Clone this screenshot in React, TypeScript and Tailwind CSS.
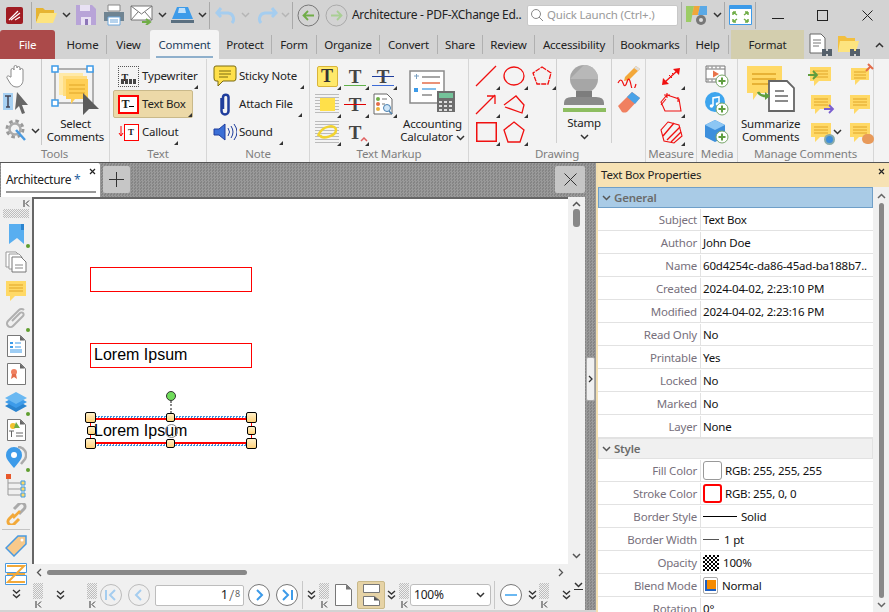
import type { ReactNode } from "react";

const CHECKER = "bg-[repeating-conic-gradient(#9a9a9a_0_25%,#858585_0_50%)] bg-[length:3px_3px]";
const DOTS = "bg-[repeating-conic-gradient(#bdbdbd_0_25%,transparent_0_50%)] bg-[length:2px_2px]";

function Ico({ w, h, children, className }: { w: number; h: number; children: ReactNode; className?: string }) {
  return (
    <svg width={w} height={h} viewBox={`0 0 ${w} ${h}`} fill="none" className={`block shrink-0 ${className ?? ""}`}>
      {children}
    </svg>
  );
}

function Chev({ color = "#333", up }: { color?: string; up?: boolean }) {
  return (
    <Ico w={9} h={6}>
      <path d={up ? "M1 5l3.5-3.5L8 5" : "M1 1l3.5 3.5L8 1"} stroke={color} strokeWidth="1.5" />
    </Ico>
  );
}

function DChev() {
  return (
    <Ico w={9} h={10}>
      <path d="M1 1l3.5 3L8 1M1 5.5l3.5 3 3.5-3" stroke="#333" strokeWidth="1.4" />
    </Ico>
  );
}

function Grip({ h = 16 }: { h?: number }) {
  return (
    <div className="flex flex-col items-center gap-[2px]">
      <div style={{ height: h }} className={`w-[10px] ${DOTS}`} />
      <Ico w={7} h={7}>
        <path d="M1 0v7M6 0.5L3 3.5l3 3" stroke="#333" strokeWidth="1" />
      </Ico>
    </div>
  );
}

/* small black drop-down marker in the corner of ribbon buttons */
function Corner() {
  return (
    <Ico w={4} h={4} className="absolute right-0 bottom-0">
      <path d="M4 0v4H0z" fill="#333" />
    </Ico>
  );
}

function Bubble({ w = 22, h = 20, line = "#e0a526", fill = "#ffd966" }: { w?: number; h?: number; line?: string; fill?: string }) {
  const b = h - 6;
  return (
    <Ico w={w} h={h}>
      <path d={`M1 1h${w - 2}v${b}H10l-5 5v-5H1z`} fill={fill} />
      <path d={`M4 5h${w - 8}M4 8h${w - 8}M4 11h${w - 8}`} stroke={line} strokeWidth="1" />
    </Ico>
  );
}

function TitleLetter({ size = 14 }: { size?: number }) {
  return <span className="font-['Liberation_Serif',serif] font-bold leading-none" style={{ fontSize: size }}>T</span>;
}

function Sep() {
  return <div className="h-[27px] w-px shrink-0 bg-[#a9a9a9]" />;
}

function TitleBar() {
  return (
    <div className="flex h-[30px] shrink-0 items-center bg-[#d3d3d3]">
      <div className="ml-[6px] mr-[8px] flex h-[17px] w-[17px] items-center justify-center rounded-[2px] bg-[#a01c22]">
        <Ico w={13} h={11}>
          <path d="M1 10L10 1M3 10l9-7M7 10l5-3" stroke="#fff" strokeWidth="1.2" />
        </Ico>
      </div>
      <Sep />
      <div className="ml-[3px]">
        <Ico w={23} h={20}>
          <path d="M1 3h7l2 2h9v3H5L1 18z" fill="#e6b432" />
          <path d="M5 8h17l-4 10H1z" fill="#fde47f" />
        </Ico>
      </div>
      <div className="ml-[4px]"><Chev /></div>
      <div className="ml-[4px]">
        <Ico w={22} h={22}>
          <path d="M1 1h16l4 4v16H1z" fill="#b8a4d8" />
          <path d="M5 1h10v6H5zM6 13h10v8H6z" fill="#e8e1f3" />
          <path d="M10 15h3v6h-3z" fill="#8d76b8" />
        </Ico>
      </div>
      <div className="ml-[6px]">
        <Ico w={22} h={22}>
          <path d="M5 1h12v6H5z" fill="#fff" stroke="#888" />
          <path d="M1 8h20v9H1z" fill="#6f8492" />
          <path d="M5 13h12v8H5z" fill="#fff" stroke="#6fa8dc" />
          <path d="M7 16h8M7 18h8" stroke="#6fa8dc" />
        </Ico>
      </div>
      <div className="ml-[5px]">
        <Ico w={24} h={20}>
          <path d="M1 1h21v14H1z" fill="#fff" stroke="#777" />
          <path d="M1 1l10.500 8L22 1M1 15l7-8M22 15l-7-8" stroke="#777" />
          <path d="M12 17h7M16 14l4 3-4 3" stroke="#70ad47" strokeWidth="2" />
        </Ico>
      </div>
      <div className="ml-[4px]"><Chev /></div>
      <div className="ml-[3px]">
        <Ico w={25} h={18}>
          <path d="M7 1h11l5 12H2z" fill="#3d9be9" />
          <path d="M9 2h6l1 5H8z" fill="#bfe0fb" />
          <path d="M1 14h23v3H1z" fill="#5a6f80" />
        </Ico>
      </div>
      <div className="ml-[3px]"><Chev /></div>
      <div className="ml-[2px]"><Sep /></div>
      <div className="ml-[5px]">
        <Ico w={23} h={18}>
          <path d="M6 2L2 7l4 4M3 7h10a6 6 0 0 1 4 10" stroke="#a5cdef" strokeWidth="3" />
        </Ico>
      </div>
      <div className="ml-[3px]"><Chev color="#b5b5b5" /></div>
      <div className="ml-[5px]">
        <Ico w={23} h={18}>
          <path d="M17 2l4 5-4 4M20 7H10a6 6 0 0 0-4 10" stroke="#a5cdef" strokeWidth="3" />
        </Ico>
      </div>
      <div className="ml-[3px]"><Chev color="#b5b5b5" /></div>
      <div className="ml-[2px]"><Sep /></div>
      <div className="ml-[4px]">
        <Ico w={23} h={23}>
          <circle cx="11.500" cy="11.500" r="10.500" stroke="#777" />
          <path d="M17 11.500H7M11 7l-4.500 4.500L11 16" stroke="#70ad47" strokeWidth="1.800" />
        </Ico>
      </div>
      <div className="ml-[5px]">
        <Ico w={23} h={23}>
          <circle cx="11.500" cy="11.500" r="10.500" stroke="#aaa" />
          <path d="M6 11.500h10M12 7l4.500 4.500L12 16" stroke="#a9cf94" strokeWidth="1.800" />
        </Ico>
      </div>
      <span className="ml-[4px] w-[175px] shrink-0 whitespace-nowrap text-[12px] tracking-[-0.3px] text-[#222]">Architecture - PDF-XChange Ed..</span>
      <div className="flex h-[21px] w-[151px] shrink-0 items-center rounded-[2px] border border-[#c8c8c8] bg-white pl-[2px]">
        <Ico w={14} h={14}>
          <circle cx="6" cy="6" r="4.500" stroke="#888" />
          <path d="M9 9l4 4" stroke="#888" />
        </Ico>
        <span className="ml-[3px] whitespace-nowrap text-[#9a9a9a]">Quick Launch (Ctrl+.)</span>
      </div>
      <div className="ml-[3px]"><Sep /></div>
      <div className="ml-[3px]">
        <Ico w={24} h={24}>
          <path d="M1 3h8l-3 16H1z" fill="#9ccc65" />
          <path d="M9 3h6l-2 9H7z" fill="#f0a73a" />
          <path d="M15 3h7v9h-9z" fill="#5aa9e6" />
          <circle cx="16" cy="17" r="5" fill="#777" />
          <circle cx="16" cy="17" r="2" fill="#ddd" />
        </Ico>
      </div>
      <div className="ml-[4px]"><Chev /></div>
      <div className="ml-[2px]"><Sep /></div>
      <div className="ml-[4px]">
        <Ico w={23} h={20}>
          <path d="M.5.5h22v19H.5z" fill="#fff" stroke="#3d9be9" />
          <path d="M1 1h21v3H1z" fill="#3d9be9" />
          <path d="M4 7l4 3M4 7v3M4 7h3M19 7l-4 3M19 7v3M19 7h-3M4 17l4-3M4 17v-3M4 17h3M19 17l-4-3M19 17v-3M19 17h-3" stroke="#70ad47" strokeWidth="1.500" />
        </Ico>
      </div>
      <div className="ml-[3px]"><Sep /></div>
      <div className="ml-[16px]">
        <Ico w={12} h={12}><path d="M0 9.500h12" stroke="#222" /></Ico>
      </div>
      <div className="ml-[33px] h-[11px] w-[11px] border border-[#222]" />
      <div className="ml-[34px]">
        <Ico w={11} h={11}><path d="M.5.5l10 10M10.500.5l-10 10" stroke="#222" /></Ico>
      </div>
    </div>
  );
}

const TABS = [
  { label: "Home", w: 52 },
  { label: "View", w: 43 },
  { label: "Comment", w: 69, active: true },
  { label: "Protect", w: 53 },
  { label: "Form", w: 45 },
  { label: "Organize", w: 63 },
  { label: "Convert", w: 58 },
  { label: "Share", w: 45 },
  { label: "Review", w: 52 },
  { label: "Accessibility", w: 79 },
  { label: "Bookmarks", w: 73 },
  { label: "Help", w: 42 },
];

function TabBar() {
  return (
    <div className="flex h-[29px] shrink-0 items-stretch bg-[#d3d3d3] text-[#222]">
      <div className="flex w-[55px] items-center justify-center rounded-t-[3px] bg-[#ab4a4a] text-white">File</div>
      {TABS.map((t) =>
        t.active ? (
          <div key={t.label} style={{ width: t.w }} className="relative flex items-center justify-center rounded-t-[3px] bg-[#f4f4f4] text-[#1f3d5c]">
            {t.label}
            <div className="absolute bottom-[1px] left-[6px] right-[6px] h-[2px] bg-[#8fb0cc]" />
          </div>
        ) : (
          <div key={t.label} style={{ width: t.w }} className="flex items-center justify-center">
            <span className={`flex-1 text-center ${t.label === "Home" ? "pl-[4px]" : ""}`}>{t.label}</span>
            {t.label !== "View" && <div className="h-[19px] w-px bg-[#b0b0b0]" />}
          </div>
        )
      )}
      <div className="ml-[2px] flex w-[73px] items-center justify-center bg-[#d3ceae]">Format</div>
      <div className="ml-[4px] flex items-center">
        <Ico w={26} h={24}>
          <path d="M2 1h11l4 4v15H2z" fill="#fff" stroke="#666" />
          <path d="M5 7h8M5 10h8M5 13h6" stroke="#777" />
          <path d="M14 16h4v7h-4zM20 16h4v7h-4zM17 18h4v3h-4z" fill="#55606b" />
        </Ico>
      </div>
      <div className="ml-[3px] flex items-center">
        <Ico w={26} h={24}>
          <path d="M1 3h7l2 2h8v14H1z" fill="#f2bf3f" />
          <path d="M3 8h19l-3 11H1z" fill="#fde47f" />
          <path d="M13 16h4v7h-4zM19 16h4v7h-4zM16 18h4v3h-4z" fill="#55606b" />
        </Ico>
      </div>
      <div className="ml-[12px] flex items-center"><Chev up /></div>
    </div>
  );
}

function Group({ label, width, children }: { label: string; width: number; children: ReactNode }) {
  return (
    <div style={{ width }} className="flex shrink-0 flex-col border-r border-[#d6d6d6]">
      <div className="h-[86px] shrink-0">{children}</div>
      <div className="flex flex-1 items-center justify-center whitespace-nowrap text-[#7f7f7f]">{label}</div>
    </div>
  );
}

function ListBtn({ icon, label, active, w }: { icon: ReactNode; label: string; active?: boolean; w: number }) {
  return (
    <div style={{ width: w }} className={`relative flex h-[28px] items-center rounded-[2px] border ${active ? "border-[#c9b98a] bg-[#ecd9a8]" : "border-transparent"}`}>
      <div className="flex w-[28px] shrink-0 justify-center">{icon}</div>
      <span className="whitespace-nowrap">{label}</span>
      <Corner />
    </div>
  );
}

function Cell({ children, corner = true }: { children: ReactNode; corner?: boolean }) {
  return (
    <div className="relative flex h-[28px] w-[28px] items-center justify-center">
      {children}
      {corner && <Corner />}
    </div>
  );
}

function Tools() {
  return (
    <div className="flex h-full">
      <div className="flex w-[42px] flex-col border-r border-[#c9c9c9] pl-[5px] pt-[5px]">
        <Ico w={22} h={24}>
          <path d="M6 13V6a1.500 1.500 0 0 1 3 0V3a1.500 1.500 0 0 1 3 0v1a1.500 1.500 0 0 1 3 0v2a1.500 1.500 0 0 1 3 0v10c0 4-3 7-6 7s-5-1-7-4l-3-5c-1-2 2-3 3-1z" fill="#fff" stroke="#8a8a8a" />
        </Ico>
        <div className="-ml-[2px] mt-[3px]">
          <Ico w={26} h={25}>
            <path d="M0 2h10v17H0z" fill="#a7d0f2" />
            <path d="M2 5h6M5 5v11M3 16h4" stroke="#445" strokeWidth="1.500" />
            <path d="M14 1l11 13h-6l3 8-3 1-3-8-4 4z" fill="#666" />
          </Ico>
        </div>
        <div className="mt-[3px] flex items-center gap-[4px]">
          <Ico w={22} h={24}>
            <circle cx="10" cy="10" r="8" stroke="#999" strokeWidth="3" strokeDasharray="3.500 2.800" />
            <circle cx="10" cy="10" r="5.500" stroke="#aaa" strokeWidth="2.500" />
            <path d="M11 11l9 10" stroke="#4a9ae0" strokeWidth="2.500" />
          </Ico>
          <Chev />
        </div>
      </div>
      <div className="flex flex-1 flex-col items-center pt-[6px]">
        <Ico w={50} h={50}>
          <path d="M4 4h38v34H4z" stroke="#9a9a9a" strokeWidth="1.500" />
          <rect x="1" y="1" width="6" height="6" fill="#fff" stroke="#3d9be9" strokeWidth="1.500" />
          <rect x="36" y="1" width="6" height="6" fill="#fff" stroke="#3d9be9" strokeWidth="1.500" />
          <rect x="1" y="35" width="6" height="6" fill="#fff" stroke="#3d9be9" strokeWidth="1.500" />
          <path d="M8 8h24v22H8z" fill="#ffe9a8" />
          <path d="M12 11h24v20H12z" fill="#ffdd80" />
          <path d="M15 14h22v20H24l-4 5v-5h-5z" fill="#ffcf55" />
          <path d="M18 20h16M18 24h16M18 28h16" stroke="#e0a526" />
          <path d="M32 28l16 16H38l-6 6z" fill="#5c5c5c" />
        </Ico>
        <div className="mt-[2px] text-center leading-[13px]">Select<br />Comments</div>
      </div>
    </div>
  );
}

function TextGroup() {
  return (
    <div className="flex flex-col gap-0 pl-[3px] pt-[3px]">
      <ListBtn w={86} label="Typewriter" icon={
        <div className="relative h-[21px] w-[21px] border border-dotted border-[#555]">
          <div className="pl-[3px] pt-[1px]"><TitleLetter size={10} /></div>
          <div className="absolute bottom-[2px] left-[2px] right-[2px] h-[5px] bg-[repeating-linear-gradient(90deg,#444_0_3px,transparent_3px_4px)]" />
        </div>
      } />
      <ListBtn w={80} active label="Text Box" icon={
        <div className="flex h-[19px] w-[21px] items-center justify-center border-2 border-[#ff0000] bg-white">
          <TitleLetter size={12} /><span className="mt-[5px] h-px w-[5px] bg-black" />
        </div>
      } />
      <ListBtn w={66} label="Callout" icon={
        <div className="flex items-center">
          <Ico w={6} h={12}><path d="M3 0v10M1 7l2 3 2-3" stroke="#ff0000" strokeWidth="1" /></Ico>
          <div className="flex h-[17px] w-[15px] items-center justify-center border border-[#ff0000] bg-white"><TitleLetter size={9} /></div>
        </div>
      } />
    </div>
  );
}

function NoteGroup() {
  return (
    <div className="flex flex-col pl-[3px] pt-[3px]">
      <ListBtn w={95} label="Sticky Note" icon={
        <Ico w={24} h={22}>
          <path d="M3 1h18q2 0 2 2v10q0 3-2 3H10l-5 5v-5H3q-2 0-2-3V3q0-2 2-2z" fill="#ffe04a" stroke="#7a6a10" />
          <path d="M6 6h12M6 9h12M6 12h9" stroke="#7a6a10" />
        </Ico>
      } />
      <ListBtn w={93} label="Attach File" icon={
        <Ico w={12} h={24}>
          <path d="M2.500 6v13a3.500 3.500 0 0 0 7 0V5a2.800 2.800 0 0 0-5.500 0v12" stroke="#1f3d9c" strokeWidth="2.500" />
        </Ico>
      } />
      <ListBtn w={74} label="Sound" icon={
        <Ico w={24} h={18}>
          <path d="M1 6h5l6-5v16l-6-5H1z" fill="#3b6fd6" stroke="#1f3d9c" />
          <path d="M15 5q3 4 0 8M18 3q4 6 0 12M21 1q6 8 0 16" stroke="#1f3d9c" />
        </Ico>
      } />
    </div>
  );
}

function UnderT({ under, strike, extra }: { under?: string; strike?: string; extra?: ReactNode }) {
  return (
    <div className="relative flex h-[22px] w-[22px] flex-col items-center justify-center text-[#444]">
      <TitleLetter size={19} />
      {under && <div style={{ background: under }} className="absolute bottom-[1px] left-0 right-0 h-px" />}
      {strike && <div style={{ background: strike }} className="absolute left-0 right-0 top-[11px] h-px" />}
      {extra}
    </div>
  );
}

function TextMarkup() {
  return (
    <div className="flex">
      <div className="grid grid-cols-[28px_28px_28px] pl-[3px] pt-[3px]">
        <Cell>
          <div className="flex h-[21px] w-[21px] items-center justify-center rounded-[2px] border border-[#d9b43a] bg-[#ffe96a] text-[#333]"><TitleLetter size={18} /></div>
        </Cell>
        <Cell><UnderT under="#5fb04a" /></Cell>
        <Cell><UnderT under="#3d6bd6" strike="#1f3d9c" /></Cell>
        <Cell>
          <div className="flex h-[20px] w-[24px] items-center justify-center bg-[repeating-linear-gradient(#bbb_0_1px,transparent_1px_3px)]"><div className="h-[13px] w-[15px] bg-[#ffe04a]" /></div>
        </Cell>
        <Cell><UnderT strike="#e00000" /></Cell>
        <Cell>
          <Ico w={21} h={22}>
            <path d="M1 1h13l5 5v15H1z" fill="#fff" stroke="#666" />
            <circle cx="5" cy="6" r="2" fill="#70ad47" />
            <circle cx="5" cy="11" r="2" fill="#e36c4a" />
            <circle cx="5" cy="16" r="2" fill="#e8b13a" />
            <path d="M9 6h5M9 11h3" stroke="#777" />
            <circle cx="14" cy="15" r="3.500" fill="#cfe6f8" stroke="#4a80b0" />
            <path d="M16 18l3 3" stroke="#4a80b0" strokeWidth="1.500" />
          </Ico>
        </Cell>
        <Cell>
          <div className="flex h-[22px] w-[24px] items-center justify-center bg-[repeating-linear-gradient(#bbb_0_1px,transparent_1px_3px)]">
            <Ico w={22} h={18}><path d="M2 13c4-11 18-12 18-6s-14 10-16 5" stroke="#f2d430" strokeWidth="2.500" /></Ico>
          </div>
        </Cell>
        <Cell><UnderT extra={<Ico w={8} h={5} className="absolute bottom-[1px] right-[-2px]"><path d="M1 4l3-3 3 3" stroke="#e06060" strokeWidth="1.500" /></Ico>} /></Cell>
      </div>
      <div className="flex w-[75px] flex-col items-center pt-[11px]">
        <Ico w={47} h={43}>
          <path d="M1 1h34v32H1z" fill="#fff" stroke="#8a8a8a" strokeWidth="1.500" />
          <path d="M5 6h5M7.500 4v5" stroke="#7a9fc0" />
          <path d="M13 7h18" stroke="#888" strokeWidth="1.500" />
          <path d="M13 13h18" stroke="#e36c4a" strokeWidth="1.500" />
          <path d="M13 19h14" stroke="#5aa9e6" strokeWidth="1.500" />
          <path d="M13 25h10" stroke="#888" strokeWidth="1.500" />
          <path d="M5 18h4v4H5z" fill="#3d9be9" />
          <path d="M28 21h18v21H28z" fill="#6d6d6d" />
          <path d="M30 23h14v5H30z" fill="#74c39a" />
          <path d="M30 31h3v2h-3zM35 31h3v2h-3zM40 31h3v2h-3zM30 35h3v2h-3zM35 35h3v2h-3zM40 35h3v2h-3zM30 39h3v2h-3zM35 39h3v2h-3zM40 39h3v2h-3z" fill="#ddd" />
        </Ico>
        <div className="mt-[4px] whitespace-nowrap text-center leading-[13px]">Accounting<br />Calculator <span className="inline-block align-middle"><Chev /></span></div>
      </div>
    </div>
  );
}

const RED = "#f01010";

function Drawing() {
  return (
    <div className="flex">
      <div className="grid h-[84px] w-[88px] grid-cols-[28px_28px_28px] border-r border-[#d0d0d0] pl-[3px] pt-[3px]">
        <Cell><Ico w={22} h={22}><path d="M1 21L21 1" stroke={RED} strokeWidth="1.300" /></Ico></Cell>
        <Cell><Ico w={22} h={20}><ellipse cx="11" cy="10" rx="10" ry="9" stroke={RED} strokeWidth="1.300" /></Ico></Cell>
        <Cell><Ico w={22} h={20}><path d="M11 1l9 6-3 11H6L2 7z" stroke={RED} strokeWidth="1.300" strokeDasharray="5 1" /></Ico></Cell>
        <Cell><Ico w={22} h={22}><path d="M1 21L20 2M12 3h8v8" stroke={RED} strokeWidth="1.300" /></Ico></Cell>
        <Cell><Ico w={22} h={20}><path d="M1 11L13 2l8 9-2 8L2 13" stroke={RED} strokeWidth="1.300" /></Ico></Cell>
        <Cell corner={false}>{null}</Cell>
        <Cell><div className="h-[20px] w-[21px] border border-[#f01010] shadow-[inset_0_0_0_0.5px_#f01010]" /></Cell>
        <Cell><Ico w={22} h={22}><path d="M11 1l10 8-4 12H5L1 9z" stroke={RED} strokeWidth="1.300" /></Ico></Cell>
      </div>
      <div className="flex h-[84px] w-[55px] flex-col items-center border-r border-[#d0d0d0] pt-[6px]">
        <Ico w={45} h={47}>
          <circle cx="22" cy="14" r="14" fill="#a6a6a6" />
          <path d="M22 0a14 14 0 0 1 14 14H8z" fill="#b8b8b8" />
          <path d="M14 26h16v6H14z" fill="#7d7d7d" />
          <path d="M2 38q0-6 8-6h24q8 0 8 6v2H2z" fill="#8a8a8a" />
          <path d="M1 43h43v4H1z" fill="#8dbd60" />
        </Ico>
        <div className="mt-[4px] leading-[13px]">Stamp</div>
        <div className="mt-[5px]"><Chev /></div>
      </div>
      <div className="relative flex flex-1 flex-col items-center gap-[3px] pt-[5px]">
        <Ico w={24} h={24}>
          <path d="M8 13L19 2l4 3-11 11-5 1z" fill="#f3a83a" />
          <path d="M19 2l4 3-2 2-4-3z" fill="#ddd" />
          <path d="M1 19q3-6 5 0t4-1 4 3 5-1" stroke={RED} strokeWidth="1.200" />
        </Ico>
        <Ico w={24} h={23}>
          <path d="M1 15L15 1l8 6L10 21q-3 1-5 0z" fill="#f08060" />
          <path d="M10 6l5-5 8 6-5 6z" fill="#4aa3e8" />
        </Ico>
      </div>
    </div>
  );
}

function Measure() {
  return (
    <div className="flex flex-col items-center pt-[3px]">
      <Cell>
        <Ico w={18} h={17}>
          <path d="M3 14L15 3" stroke={RED} strokeWidth="1.300" />
          <path d="M0 17l1-7 6 6zM18 0l-1 7-6-6z" fill={RED} />
          <path d="M7 7l3 3M10 5l2 2" stroke={RED} />
        </Ico>
      </Cell>
      <Cell><Ico w={24} h={22}><path d="M8 2l12 4 2 12H6L2 9zM5 2l6 0M8 0v5M2 12l5-6M19 4v5" stroke={RED} strokeWidth="1.100" /></Ico></Cell>
      <Cell><Ico w={24} h={24}><path d="M9 2l11 3 3 11-8 7-10-2-3-11z" stroke={RED} strokeWidth="1.100" /><path d="M4 16L15 3M8 20L21 7M12 22l10-10" stroke={RED} strokeWidth="1.400" /></Ico></Cell>
    </div>
  );
}

function Plus({ cx, cy }: { cx: number; cy: number }) {
  return (
    <>
      <circle cx={cx} cy={cy} r="6" fill="#fff" stroke="#79a76a" />
      <path d={`M${cx - 3.5} ${cy}h7M${cx} ${cy - 3.5}v7`} stroke="#5f9e3f" strokeWidth="2" />
    </>
  );
}

function Media() {
  return (
    <div className="flex flex-col items-center pt-[3px]">
      <div className="flex h-[28px] items-center">
        <Ico w={24} h={24}>
          <path d="M1 2h19v16H1z" fill="#fff" stroke="#777" />
          <path d="M1 5h19M1 15h19" stroke="#777" />
          <path d="M3 2.500v2M7 2.500v2M11 2.500v2M15 2.500v2M3 15.500v2M7 15.500v2M11 15.500v2" stroke="#777" />
          <path d="M8 6.500l6 3.500-6 3.500z" fill="#e8734a" />
          <Plus cx={17} cy={17} />
        </Ico>
      </div>
      <div className="flex h-[28px] items-center">
        <Ico w={24} h={24}>
          <circle cx="10" cy="10" r="10" fill="#3da5ee" />
          <path d="M8 14V6l6-1v7" stroke="#fff" strokeWidth="1.500" />
          <circle cx="6.500" cy="14" r="1.800" fill="#fff" />
          <circle cx="12.500" cy="12" r="1.800" fill="#fff" />
          <Plus cx={17} cy={17} />
        </Ico>
      </div>
      <div className="flex h-[28px] items-center">
        <Ico w={24} h={24}>
          <path d="M10 0l10 5v12l-10 5-10-5V5z" fill="#3d8fdc" />
          <path d="M10 0l10 5-10 5L0 5z" fill="#8cc6f4" />
          <Plus cx={17} cy={17} />
        </Ico>
      </div>
    </div>
  );
}

function ManageComments() {
  return (
    <div className="flex">
      <div className="flex w-[66px] flex-col items-center pl-[3px] pt-[5px]">
        <Ico w={50} h={48}>
          <path d="M1 2h35v27H12l-5 7v-7H1z" fill="#ffd966" />
          <path d="M6 10h24M6 15h24M6 20h24" stroke="#e0a526" strokeWidth="1.300" />
          <path d="M23 17h18l7 7v23H23z" fill="#fff" stroke="#666" strokeWidth="1.800" />
          <path d="M29 27h9M29 32h13M29 37h13" stroke="#666" strokeWidth="1.500" />
          <path d="M12 28q2 4 8 4" stroke="#5f9e3f" strokeWidth="2.500" />
          <path d="M19 28l5 4-5 4z" fill="#5f9e3f" />
        </Ico>
        <div className="mt-[5px] whitespace-nowrap text-center leading-[13px]">Summarize<br />Comments</div>
      </div>
      <div className="grid grid-cols-[39px_39px] pl-[1px] pt-[3px]">
        <div className="flex h-[28px] items-center justify-center">
          <div className="relative"><Bubble w={23} h={20} /><Ico w={12} h={10} className="absolute left-[-2px] top-[4px]"><path d="M1 5h9M6 1l4 4-4 4" stroke="#5f9e3f" strokeWidth="1.800" /></Ico></div>
        </div>
        <div className="flex h-[28px] items-center justify-center">
          <div className="relative"><Bubble w={20} h={18} /><Ico w={9} h={9} className="absolute right-[-4px] top-[-4px]"><path d="M1 8l4-4M3 1l5 5" stroke="#e36c4a" strokeWidth="2" /></Ico></div>
        </div>
        <div className="flex h-[28px] items-center justify-center">
          <div className="relative"><Bubble w={22} h={20} /><Ico w={12} h={10} className="absolute bottom-0 right-[-3px]"><path d="M1 5h9M6 1l4 4-4 4" stroke="#7a5fd0" strokeWidth="1.800" /></Ico></div>
        </div>
        <div className="flex h-[28px] items-center justify-center"><Bubble w={22} h={20} /></div>
        <div className="relative flex h-[28px] items-center justify-center">
          <div className="relative"><Bubble w={22} h={20} /><div className="absolute bottom-[-3px] right-[-3px] h-[11px] w-[11px] rounded-full border-2 border-[#8aa] bg-[#3d8fdc]" /></div>
          <div className="absolute right-[-2px] top-[11px]"><Chev /></div>
        </div>
        <div className="flex h-[28px] items-center justify-center">
          <div className="relative"><Bubble w={22} h={20} /><div className="absolute bottom-[-2px] right-[-3px] h-[10px] w-[12px] rounded-full bg-[#e89a5a]" /></div>
        </div>
      </div>
    </div>
  );
}

function Ribbon() {
  return (
    <div className="flex h-[104px] shrink-0 border-b border-[#555] bg-[#f3f3f3] text-[#222]">
      <Group label="Tools" width={110}><Tools /></Group>
      <Group label="Text" width={97}><TextGroup /></Group>
      <Group label="Note" width={103}><NoteGroup /></Group>
      <Group label="Text Markup" width={159}><TextMarkup /></Group>
      <Group label="Drawing" width={177}><Drawing /></Group>
      <Group label="Measure" width={51}><Measure /></Group>
      <Group label="Media" width={41}><Media /></Group>
      <Group label="Manage Comments" width={136}><ManageComments /></Group>
      <div className="flex-1" />
    </div>
  );
}

function DocTabs() {
  return (
    <div className={`flex h-[34px] shrink-0 items-start ${CHECKER}`}>
      <div className="relative ml-[1px] h-[34px] w-[99px] rounded-tr-[2px] bg-white pl-[5px] pt-[8px] text-[12px] tracking-[-0.3px] text-[#222]">
        Architecture <span className="text-[#1f5fa0]">*</span>
        <div className="absolute bottom-[4px] left-[5px] h-[2px] w-[90px] bg-[#999]" />
        <Ico w={7} h={7} className="absolute right-[4px] top-[5px]"><path d="M1 1l5 5M6 1L1 6" stroke="#222" strokeWidth="1.200" /></Ico>
      </div>
      <div className="ml-[3px] mt-[3px] flex h-[27px] w-[27px] items-center justify-center rounded-[2px] bg-[#c6c6c6]">
        <Ico w={15} h={15}><path d="M7.500 0v15M0 7.500h15" stroke="#333" /></Ico>
      </div>
      <div className="flex-1" />
      <div className="mr-[11px] mt-[3px] flex h-[27px] w-[30px] items-center justify-center rounded-[2px] bg-[#c6c6c6]">
        <Ico w={13} h={13}><path d="M.5.5l12 12M12.500.5l-12 12" stroke="#333" /></Ico>
      </div>
    </div>
  );
}

function SideIcon({ children, dot }: { children: ReactNode; dot?: boolean }) {
  return (
    <div className="relative flex h-[28px] w-full shrink-0 items-center justify-center">
      {children}
      {dot && <div className="absolute bottom-0 right-[2px] h-[4px] w-[4px] rounded-full bg-[#5f9e2f]" />}
    </div>
  );
}

function Doc({ w = 19, h = 22, children }: { w?: number; h?: number; children?: ReactNode }) {
  return (
    <Ico w={w} h={h}>
      <path d={`M.5.5h${w - 6}l5 5v${h - 6}h-${w - 1}z`} fill="#fff" stroke="#777" />
      <path d={`M${w - 6} .5l5 5h-5z`} fill="#666" />
      {children}
    </Ico>
  );
}

function Sidebar() {
  return (
    <div className="flex w-[32px] shrink-0 flex-col items-center bg-[#f0f0f0]">
      <div className="flex h-[12px] w-full items-center justify-end pr-[2px]">
        <Ico w={7} h={7}><path d="M1 0v7M6 .5L3 3.500l3 3" stroke="#333" /></Ico>
      </div>
      <div className={`mb-[2px] h-[9px] w-[26px] ${DOTS}`} />
      <SideIcon dot>
        <Ico w={15} h={21}><path d="M0 0h15v20l-7-6-8 6z" fill="#58aef0" /><path d="M12 0h3v6h-3z" fill="#2b84cf" /></Ico>
      </SideIcon>
      <SideIcon>
        <Ico w={22} h={22}>
          <path d="M1 1h10l3 3v12H1z" fill="#fff" stroke="#999" />
          <path d="M4 3h10l3 3v12H4z" fill="#fff" stroke="#999" />
          <path d="M7 6h9l5 5v10H7z" fill="#fff" stroke="#777" />
          <path d="M10 14h8M10 17h8" stroke="#888" />
        </Ico>
      </SideIcon>
      <SideIcon><Bubble w={22} h={21} /></SideIcon>
      <SideIcon dot>
        <Ico w={23} h={22}><path d="M19 3a3.500 3.500 0 0 0-5 0L3 14a3.500 3.500 0 0 0 5 5L18 9a2 2 0 0 0-3-3L7 14" stroke="#b0b0b0" strokeWidth="2" /></Ico>
      </SideIcon>
      <SideIcon>
        <Doc><path d="M3 7h3v2H3zM3 11h3v2H3z" fill="#3d9be9" /><path d="M8 8h6M8 12h6M3 15h12M3 17h12" stroke="#3d9be9" /></Doc>
      </SideIcon>
      <SideIcon>
        <Doc><circle cx="7" cy="9" r="3" fill="#f08060" /><path d="M5 11l-1 5 3-2 3 2-1-5" fill="#e36c4a" /></Doc>
      </SideIcon>
      <SideIcon dot>
        <Ico w={22} h={20}>
          <path d="M11 8l11 6-11 6L0 14z" fill="#2b84cf" />
          <path d="M11 4l11 6-11 6L0 10z" fill="#3d9be9" />
          <path d="M11 0l11 6-11 6L0 6z" fill="#6ab8f2" />
        </Ico>
      </SideIcon>
      <SideIcon>
        <Doc>
          <circle cx="6" cy="7" r="3" fill="#f2c230" />
          <path d="M9 3l4 6H7z" fill="#70ad47" />
          <path d="M2 12h5M4.500 12v6M9 14h7M9 17h7" stroke="#666" />
        </Doc>
      </SideIcon>
      <SideIcon dot>
        <Ico w={22} h={24}>
          <path d="M9 22c-5-6-8-9-8-13a8 8 0 0 1 16 0c0 4-3 7-8 13z" fill="#3d9be9" />
          <circle cx="9" cy="9" r="3" fill="#fff" />
          <path d="M13 1a8 8 0 0 1 7 12l-4 5" stroke="#aaa" strokeWidth="2.500" />
        </Ico>
      </SideIcon>
      <SideIcon>
        <Ico w={20} h={24}>
          <path d="M2 3v18M2 9h13M2 15h13M2 21h13" stroke="#999" />
          <path d="M0 0h5v5H0z" fill="#e8582a" />
          <path d="M15 7h4v4h-4zM15 13h4v4h-4zM15 19h4v4h-4z" fill="#ffd966" stroke="#3d9be9" />
        </Ico>
      </SideIcon>
      <SideIcon>
        <Ico w={23} h={22}>
          <path d="M9 11l-5 5a3.500 3.500 0 0 0 5 5l5-5" stroke="#f2a93a" strokeWidth="3" />
          <path d="M14 11l5-5a3.500 3.500 0 0 0-5-5l-5 5" stroke="#aaa" strokeWidth="3" />
          <path d="M8 15l7-7" stroke="#f2a93a" strokeWidth="2.500" />
        </Ico>
      </SideIcon>
      <div className="mb-[2px] mt-px h-px w-[28px] shrink-0 bg-[#c4c4c4]" />
      <SideIcon>
        <Ico w={22} h={22}>
          <path d="M1 13L13 1h8v8L9 21z" fill="#f8c98a" stroke="#4a9ae0" strokeWidth="1.500" />
          <circle cx="17" cy="5" r="1.500" fill="#fff" />
        </Ico>
      </SideIcon>
      <SideIcon>
        <Ico w={22} h={22}>
          <path d="M.5.5h21v9H.5zM.5 12.500h21v9H.5z" stroke="#4a9ae0" fill="#fff" />
          <path d="M2 3h17L3 19h17M2 11h18" stroke="#f2a93a" strokeWidth="2" />
        </Ico>
      </SideIcon>
      <div className="mt-px"><DChev /></div>
    </div>
  );
}

function Handle({ x, y, big }: { x: number; y: number; big?: boolean }) {
  const s = big ? 11 : 9;
  return (
    <div
      style={{ left: x - s / 2, top: y - s / 2, width: s, height: s }}
      className="absolute rounded-[2px] border border-black bg-linear-to-b from-[#fff0c8] to-[#ffd27a]"
    />
  );
}

function Canvas() {
  return (
    <div className="relative min-w-0 flex-1 overflow-hidden border-l-2 border-t-2 border-[#666] bg-white">
      {/* annotations sit on a free canvas, offsets are relative to the page corner */}
      <div className="absolute left-[56px] top-[68px] h-[25px] w-[162px] border border-[#ff0000]" />
      <div className="absolute left-[56px] top-[144px] flex h-[25px] w-[162px] items-center border border-[#ff0000] pb-[2px] pl-[3px] font-['Liberation_Sans',sans-serif] text-[16px] tracking-normal text-black">Lorem Ipsum</div>
      <div className="absolute left-[132px] top-[192px] h-[10px] w-[10px] rounded-full border border-[#333] bg-[#6fdc5a]" />
      <div className="absolute left-[136px] top-[202px] h-[12px] border-l-2 border-dotted border-[#888]" />
      <div className="absolute left-[54px] top-[217px] h-[3px] w-[167px] bg-[repeating-conic-gradient(#3d8fdc_0_25%,#fff_0_50%)] bg-[length:3px_3px]" />
      <div className="absolute left-[54px] top-[244px] h-[3px] w-[167px] bg-[repeating-conic-gradient(#3d8fdc_0_25%,#fff_0_50%)] bg-[length:3px_3px]" />
      <div className="absolute left-[56px] top-[219px] flex h-[26px] w-[162px] items-center border border-y-2 border-[#ff0000] bg-white pl-[3px] font-['Liberation_Sans',sans-serif] text-[16px] tracking-normal text-black">Lorem Ipsum</div>
      <div className="absolute left-[131px] top-[225px] h-[14px] w-[13px] rounded-full border border-[#888]" />
      <Handle x={56.500} y={218} big />
      <Handle x={136.500} y={218} />
      <Handle x={217.500} y={218} big />
      <Handle x={57} y={231.500} />
      <Handle x={217.500} y={231.500} />
      <Handle x={56.500} y={244} big />
      <Handle x={136.500} y={244} />
      <Handle x={217.500} y={244} big />
    </div>
  );
}

function VScroll() {
  return (
    <div className="flex w-[17px] shrink-0 flex-col items-center bg-[#f0f0f0] pt-[4px] pb-[5px]">
      <Chev up color="#555" />
      <div className="mt-[2px] h-[18px] w-[7px] rounded-[3px] bg-[#888]" />
      <div className="flex-1" />
      <Chev color="#555" />
    </div>
  );
}

function NavBtn({ path, color, light }: { path: string; color: string; light?: boolean }) {
  return (
    <Ico w={22} h={22}>
      <circle cx="11" cy="11" r="10.500" stroke={light ? "#bbb" : "#777"} fill={light ? "#f0f0f0" : "#fff"} />
      <path d={path} stroke={color} strokeWidth="2" />
    </Ico>
  );
}

function BottomBar() {
  return (
    <div className="flex h-[30px] shrink-0 items-center bg-[#f0f0f0] text-[#222]">
      <div className="ml-[1px] w-[10px]"><Grip /></div>
      <div className="ml-[13px]"><DChev /></div>
      <div className="ml-[22px] w-[10px]"><Grip /></div>
      <div className="ml-[3px]"><NavBtn light color="#a5cdef" path="M6 6v10M15 6l-5 5 5 5" /></div>
      <div className="ml-[6px]"><NavBtn light color="#a5cdef" path="M13 6l-5 5 5 5" /></div>
      <div className="ml-[5px] flex h-[21px] w-[89px] items-center justify-end rounded-[2px] border border-[#bdbdbd] bg-white pr-[3px] text-[13px]">
        1<span className="mx-[1px] text-[15px] font-light text-[#555]">/</span><span className="mb-[3px] text-[9px] text-[#666]">8</span>
      </div>
      <div className="ml-[4px]"><NavBtn color="#3d9be9" path="M9 6l5 5-5 5" /></div>
      <div className="ml-[6px]"><NavBtn color="#3d9be9" path="M7 6l5 5-5 5M16 6v10" /></div>
      <div className="ml-[4px] h-[28px] w-px bg-[#c8c8c8]" />
      <div className="ml-[4px]"><DChev /></div>
      <div className="ml-[3px] w-[10px]"><Grip /></div>
      <div className="ml-[6px]">
        <Ico w={17} h={22}><path d="M.5.5h11l5 5v16H.5z" fill="#fff" stroke="#777" /><path d="M11 .5l5.500 5H11z" fill="#777" /></Ico>
      </div>
      <div className="ml-[5px] flex h-[28px] w-[28px] items-center justify-center rounded-[2px] border border-[#c9b98a] bg-[#e6d3a6]">
        <Ico w={17} h={22}>
          <path d="M.5.5h16v8H.5z" fill="#fff" stroke="#777" />
          <path d="M.5 12.500h11l5 4v5H.5z" fill="#fff" stroke="#777" />
          <path d="M11 12.500l5.500 4H11z" fill="#555" />
        </Ico>
      </div>
      <div className="ml-[2px]"><DChev /></div>
      <div className="ml-[3px] w-[10px]"><Grip /></div>
      <div className="ml-[1px] flex h-[22px] w-[81px] items-center justify-between rounded-[3px] border border-[#bdbdbd] bg-white pl-[3px] pr-[5px]">
        <span className="text-[12px] text-[#222]">100%</span>
        <Chev />
      </div>
      <div className="ml-[3px] h-[28px] w-px bg-[#c8c8c8]" />
      <div className="ml-[5px]"><NavBtn color="#6ab8f2" path="M5 11h12" /></div>
      <div className="ml-[6px]"><DChev /></div>
      <div className="ml-[2px] w-[10px]"><Grip /></div>
      <div className="ml-[13px]"><DChev /></div>
      <div className="relative top-[-9px] ml-[3px]">
        <Chev />
        <div className="mt-[1px] h-px w-[9px] bg-[#333]" />
      </div>
    </div>
  );
}

function DocumentPane() {
  return (
    <div className="flex h-full w-[596px] shrink-0 flex-col">
      <DocTabs />
      <div className="flex min-h-0 flex-1">
        <Sidebar />
        <div className="flex min-w-0 flex-1 flex-col">
          <div className="flex min-h-0 flex-1">
            <Canvas />
            <VScroll />
          </div>
          <div className="flex h-[16px] shrink-0 items-center bg-[#f0f0f0] pl-[4px] pr-[21px]">
            <Ico w={6} h={9}><path d="M5 1L1.500 4.500 5 8" stroke="#555" strokeWidth="1.300" /></Ico>
            <div className="ml-[5px] h-[5px] w-[200px] rounded-[3px] bg-[#888]" />
            <div className="flex-1" />
            <Ico w={6} h={9}><path d="M1 1l3.500 3.500L1 8" stroke="#555" strokeWidth="1.300" /></Ico>
          </div>
          <BottomBar />
        </div>
        <div className={`relative w-[11px] shrink-0 ${CHECKER}`}>
          <div className="absolute left-[1px] top-[160px] flex h-[44px] w-[9px] items-center justify-center rounded-[2px] border border-[#aaa] bg-[#f0f0f0]">
            <Ico w={5} h={8}><path d="M1 1l3 3-3 3" stroke="#333" strokeWidth="1.300" /></Ico>
          </div>
        </div>
      </div>
      <div className="h-[2px] shrink-0 bg-[#d3d3d3]" />
    </div>
  );
}

function Row({ label, children }: { label: string; children: ReactNode }) {
  return (
    <div className="flex h-[23px] shrink-0 items-center border-b border-[#e2e2e2] bg-white pt-px">
      <div className="flex h-full w-[103px] shrink-0 items-center justify-end border-r border-[#e2e2e2] pr-[3px] text-[#77707c]">{label}</div>
      <div className="flex min-w-0 flex-1 items-center whitespace-nowrap pl-[2px] text-[#111]">{children}</div>
    </div>
  );
}

function Section({ label, active }: { label: string; active?: boolean }) {
  return (
    <div className={`flex h-[21px] shrink-0 items-center border font-semibold text-[#6b6b6b] ${active ? "border-[#6f9fc8] bg-[#a9cbe6]" : "border-[#e2e2e2] bg-[#f0f0f0]"}`}>
      <div className="ml-[3px] mr-[3px]"><Chev color="#555" /></div>
      {label}
    </div>
  );
}

function Swatch({ red }: { red?: boolean }) {
  return <div className={`mr-[3px] h-[19px] w-[19px] rounded-[3px] bg-white ${red ? "border-2 border-[#ff0000]" : "border border-[#999]"}`} />;
}

function PropertiesPanel() {
  return (
    <div className="flex h-full min-w-0 flex-1 flex-col border-l-2 border-[#f3dfb0] bg-[#f0f0f0] text-[#111]">
      <div className="flex h-[24px] shrink-0 items-center justify-between bg-[#f7e2b4] pl-[3px] pr-[4px]">
        <span className="text-[#222]">Text Box Properties</span>
        <Ico w={7} h={7} className="mb-[7px]"><path d="M1 1l5 5M6 1L1 6" stroke="#222" strokeWidth="1.200" /></Ico>
      </div>
      <div className="flex min-h-0 flex-1 overflow-hidden">
        <div className="w-[275px] shrink-0">
          <Section active label="General" />
          <Row label="Subject">Text Box</Row>
          <Row label="Author">John Doe</Row>
          <Row label="Name">60d4254c-da86-45ad-ba188b7..</Row>
          <Row label="Created">2024-04-02, 2:23:10 PM</Row>
          <Row label="Modified">2024-04-02, 2:23:16 PM</Row>
          <Row label="Read Only">No</Row>
          <Row label="Printable">Yes</Row>
          <Row label="Locked">No</Row>
          <Row label="Marked">No</Row>
          <Row label="Layer">None</Row>
          <Section label="Style" />
          <Row label="Fill Color"><Swatch />RGB: 255, 255, 255</Row>
          <Row label="Stroke Color"><Swatch red />RGB: 255, 0, 0</Row>
          <Row label="Border Style"><div className="mr-[4px] h-px w-[34px] bg-black" />Solid</Row>
          <Row label="Border Width"><div className="mr-[5px] h-px w-[16px] bg-[#555]" />1 pt</Row>
          <Row label="Opacity">
            <div className="mr-[4px] h-[16px] w-[16px] bg-[repeating-conic-gradient(#000_0_25%,#fff_0_50%)] bg-[length:4px_4px]" />100%
          </Row>
          <Row label="Blend Mode">
            <div className="mr-[4px] flex h-[17px] w-[15px] items-center justify-center rounded-[2px] border border-[#aaa] bg-white">
              <div className="h-[11px] w-[11px] border-b-2 border-l-2 border-[#1f5fc0] bg-[#f58a00]" />
            </div>
            Normal
          </Row>
          <Row label="Rotation">0°</Row>
        </div>
        <div className="flex flex-1 flex-col items-center pb-[4px] pt-[6px]">
          <Chev up color="#666" />
          <div className="mt-[4px] w-[5px] flex-1 rounded-[3px] bg-[#888]" />
          <div className="mt-[4px]"><Chev color="#666" /></div>
        </div>
      </div>
    </div>
  );
}

export default function App() {
  return (
    <div className="flex h-[612px] w-[889px] flex-col overflow-hidden bg-[#d3d3d3] font-['Noto_Sans',sans-serif] text-[11.5px] tracking-[-0.2px]">
      <TitleBar />
      <TabBar />
      <Ribbon />
      <div className="flex min-h-0 flex-1">
        <DocumentPane />
        <PropertiesPanel />
      </div>
    </div>
  );
}
